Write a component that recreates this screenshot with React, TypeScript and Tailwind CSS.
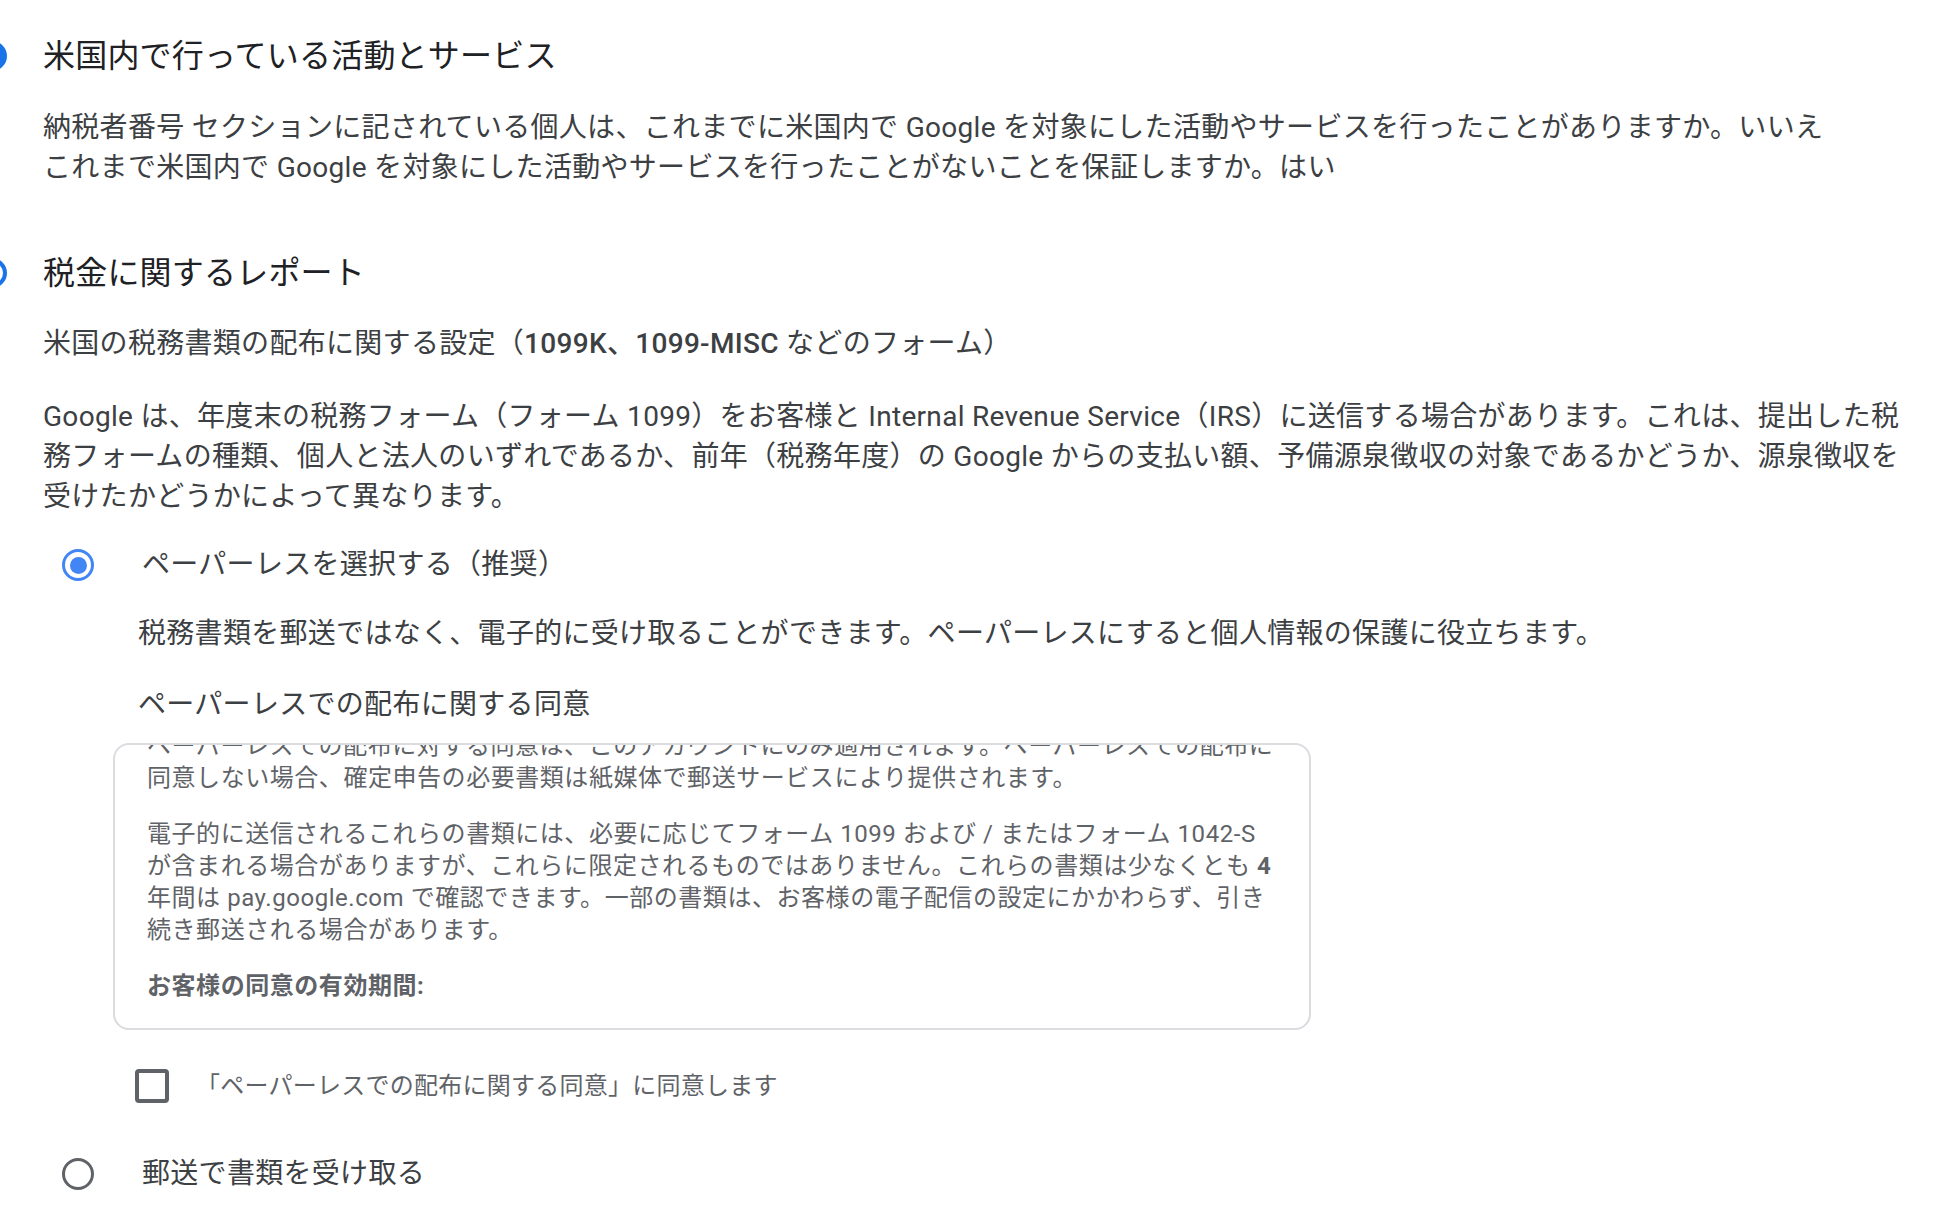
import React from "react";

const Line = ({ children }: { children: React.ReactNode }) => (
  <div className="whitespace-nowrap">{children}</div>
);

export default function App() {
  return (
    <div className="w-[1934px] h-[1228px] overflow-hidden bg-white font-[Roboto,'Noto_Sans_CJK_JP',sans-serif] text-[#3c4043]">
      <div className="pt-[36px]">
        {/* Section 1 heading */}
        <div className="flex items-center h-[40px]">
          <div className="w-[30px] h-[30px] rounded-full bg-[#1a73e8] ml-[-23px] mr-[36px] shrink-0" />
          <div className="text-[32px] leading-[40px] text-[#202124] tracking-[0.2px]">米国内で行っている活動とサービス</div>
        </div>
        <div className="pl-[43px] mt-[32px] text-[28px] leading-[40px] tracking-[0.3px]">
          <Line>納税者番号 セクションに記されている個人は、これまでに米国内で Google を対象にした活動やサービスを行ったことがありますか。いいえ</Line>
          <Line>これまで米国内で Google を対象にした活動やサービスを行ったことがないことを保証しますか。はい</Line>
        </div>

        {/* Section 2 heading */}
        <div className="flex items-center h-[40px] mt-[65px]">
          <div className="w-[30px] h-[30px] rounded-full border-[4px] border-[#1a73e8] ml-[-23px] mr-[36px] shrink-0" />
          <div className="text-[32px] leading-[40px] text-[#202124] tracking-[0.2px]">税金に関するレポート</div>
        </div>

        <div className="pl-[43px] tracking-[0.3px]">
          <div className="mt-[31px] text-[28px] leading-[40px] whitespace-nowrap">
            米国の税務書類の配布に関する設定（<span className="font-medium">1099K、1099-MISC</span> などのフォーム）
          </div>
          <div className="mt-[33px] text-[28px] leading-[40px]">
            <Line>Google は、年度末の税務フォーム（フォーム 1099）をお客様と Internal Revenue Service（IRS）に送信する場合があります。これは、提出した税</Line>
            <Line>務フォームの種類、個人と法人のいずれであるか、前年（税務年度）の Google からの支払い額、予備源泉徴収の対象であるかどうか、源泉徴収を</Line>
            <Line>受けたかどうかによって異なります。</Line>
          </div>

          {/* Radio 1 */}
          <div className="flex items-center h-[40px] mt-[28px]">
            <div className="ml-[19px] w-[32px] h-[32px] rounded-full border-[3.5px] border-[#4285f4] flex items-center justify-center shrink-0">
              <div className="w-[17px] h-[17px] rounded-full bg-[#4285f4]" />
            </div>
            <div className="ml-[48px] text-[28px] leading-[40px]">ペーパーレスを選択する（推奨）</div>
          </div>

          <div className="pl-[95px] mt-[29px] text-[28px] leading-[40px] whitespace-nowrap">
            税務書類を郵送ではなく、電子的に受け取ることができます。ペーパーレスにすると個人情報の保護に役立ちます。
          </div>
          <div className="pl-[95px] mt-[31px] text-[28px] leading-[40px] whitespace-nowrap">
            ペーパーレスでの配布に関する同意
          </div>

          {/* Consent box */}
          <div className="ml-[70px] mt-[18px] w-[1198px] h-[287px] border-2 border-[#dadce0] rounded-[16px] overflow-hidden">
            <div className="px-[32px] mt-[-15px] text-[24px] leading-[32px] text-[#5f6368] tracking-[0.55px]">
              <div>
                <Line>ペーパーレスでの配布に対する同意は、このアカウントにのみ適用されます。ペーパーレスでの配布に</Line>
                <Line>同意しない場合、確定申告の必要書類は紙媒体で郵送サービスにより提供されます。</Line>
              </div>
              <div className="mt-[24px]">
                <Line>電子的に送信されるこれらの書類には、必要に応じてフォーム 1099 および / またはフォーム 1042-S</Line>
                <Line>
                  が含まれる場合がありますが、これらに限定されるものではありません。これらの書類は少なくとも <span className="font-bold">4</span>
                </Line>
                <Line>年間は pay.google.com で確認できます。一部の書類は、お客様の電子配信の設定にかかわらず、引き</Line>
                <Line>続き郵送される場合があります。</Line>
              </div>
              <div className="mt-[24px] font-bold">お客様の同意の有効期間:</div>
            </div>
          </div>

          {/* Checkbox */}
          <div className="flex items-center mt-[39px] h-[34px]">
            <div className="ml-[92px] w-[34px] h-[34px] border-[4px] border-[#5f6368] rounded-[4px] shrink-0" />
            <div className="ml-[27px] text-[24px] leading-[32px] text-[#5f6368] whitespace-nowrap tracking-[0.25px]">
              「ペーパーレスでの配布に関する同意」に同意します
            </div>
          </div>

          {/* Radio 2 */}
          <div className="flex items-center h-[40px] mt-[51px]">
            <div className="ml-[19px] w-[32px] h-[32px] rounded-full border-[3.5px] border-[#5f6368] shrink-0" />
            <div className="ml-[48px] text-[28px] leading-[40px]">郵送で書類を受け取る</div>
          </div>
        </div>
      </div>
    </div>
  );
}
